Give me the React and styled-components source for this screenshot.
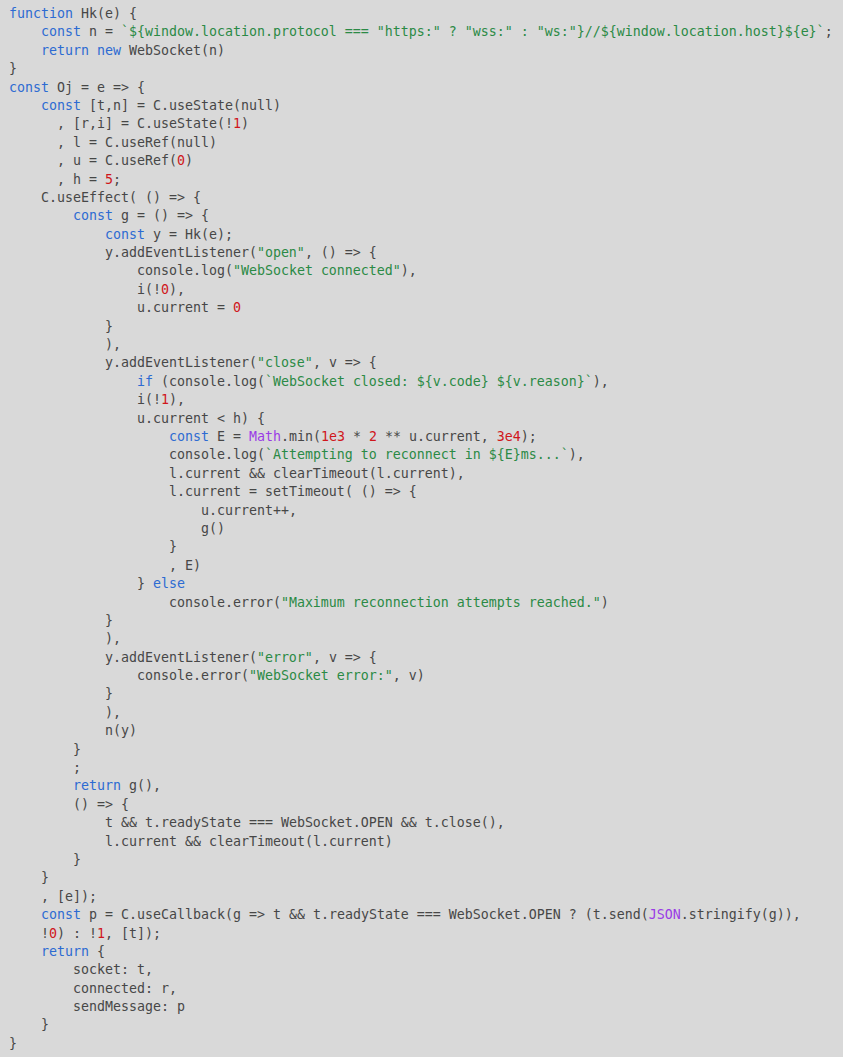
import React from "react";
import styled, { createGlobalStyle } from "styled-components";

const GlobalStyle = createGlobalStyle`
  html, body {
    margin: 0;
    padding: 0;
    background: #d9d9d9;
  }
  #root {
    min-height: 1057px;
    background: #d9d9d9;
  }
`;

const Editor = styled.div`
  box-sizing: border-box;
  min-height: 1057px;
  padding: 5px 0 0 9px;
  background: #d9d9d9;
  font-family: "DejaVu Sans Mono", "Liberation Mono", monospace;
  font-size: 13.29px;
  line-height: 18.4px;
  color: #474747;
`;

const Line = styled.div`
  white-space: pre;
  height: 18.4px;
`;

const colors = {
  keyword: "#2d6bd2",
  string: "#2b8a45",
  number: "#d0161b",
  builtin: "#9a3be6",
  plain: "#474747",
};

const Token = styled.span`
  color: ${(p) => colors[p.$kind] || colors.plain};
`;

const source = `function Hk(e) {
    const n = \`\${window.location.protocol === "https:" ? "wss:" : "ws:"}//\${window.location.host}\${e}\`;
    return new WebSocket(n)
}
const Oj = e => {
    const [t,n] = C.useState(null)
      , [r,i] = C.useState(!1)
      , l = C.useRef(null)
      , u = C.useRef(0)
      , h = 5;
    C.useEffect( () => {
        const g = () => {
            const y = Hk(e);
            y.addEventListener("open", () => {
                console.log("WebSocket connected"),
                i(!0),
                u.current = 0
            }
            ),
            y.addEventListener("close", v => {
                if (console.log(\`WebSocket closed: \${v.code} \${v.reason}\`),
                i(!1),
                u.current < h) {
                    const E = Math.min(1e3 * 2 ** u.current, 3e4);
                    console.log(\`Attempting to reconnect in \${E}ms...\`),
                    l.current && clearTimeout(l.current),
                    l.current = setTimeout( () => {
                        u.current++,
                        g()
                    }
                    , E)
                } else
                    console.error("Maximum reconnection attempts reached.")
            }
            ),
            y.addEventListener("error", v => {
                console.error("WebSocket error:", v)
            }
            ),
            n(y)
        }
        ;
        return g(),
        () => {
            t && t.readyState === WebSocket.OPEN && t.close(),
            l.current && clearTimeout(l.current)
        }
    }
    , [e]);
    const p = C.useCallback(g => t && t.readyState === WebSocket.OPEN ? (t.send(JSON.stringify(g)),
    !0) : !1, [t]);
    return {
        socket: t,
        connected: r,
        sendMessage: p
    }
}`;

const KEYWORDS = new Set(["function", "const", "return", "new", "if", "else"]);
const BUILTINS = new Set(["Math", "JSON"]);

function tokenize(line) {
  const re = /("[^"]*"|`[^`]*`|\b\d+(?:e\d+)?\b|\w+|[^"`\w]+)/g;
  const out = [];
  let m;
  while ((m = re.exec(line))) {
    const text = m[0];
    let kind = "plain";
    if (text[0] === '"' || text[0] === "`") kind = "string";
    else if (/^\d/.test(text)) kind = "number";
    else if (KEYWORDS.has(text)) kind = "keyword";
    else if (BUILTINS.has(text)) kind = "builtin";
    out.push({ text, kind });
  }
  return out;
}

const lines = source.split("\n").map(tokenize);

export default function App() {
  return (
    <>
      <GlobalStyle />
      <Editor>
        {lines.map((tokens, i) => (
          <Line key={i}>
            {tokens.length === 0
              ? " "
              : tokens.map((t, j) => (
                  <Token key={j} $kind={t.kind}>
                    {t.text}
                  </Token>
                ))}
          </Line>
        ))}
      </Editor>
    </>
  );
}
